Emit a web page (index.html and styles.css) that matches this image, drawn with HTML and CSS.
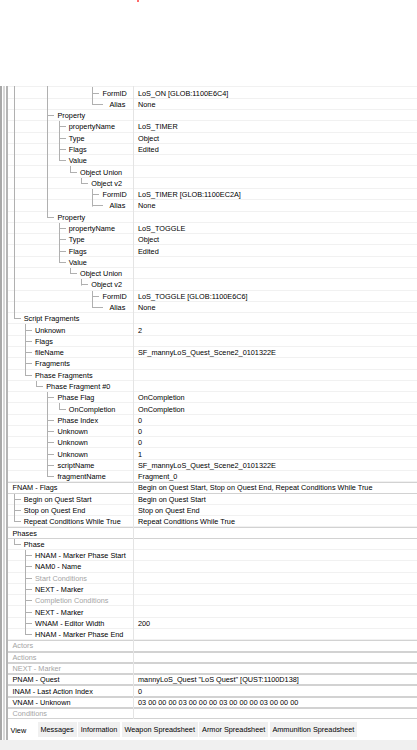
FILE: index.html
```html
<!DOCTYPE html>
<html lang="en">
<head>
<meta charset="utf-8">
<title>Record View</title>
<link rel="stylesheet" href="styles.css">
</head>
<body>
<div class="header"><div class="tick"></div></div>
<div class="work">
  <div class="bars"></div>
  <div class="main">
    <div class="grid">
      <div class="rows">
        <div class="row"><div class="name"><i class="p"></i><i></i><i></i><i class="p"></i><i></i><i></i><i class="e"></i></div><div class="val"></div></div>
        <div class="row"><div class="name"><i class="p"></i><i></i><i></i><i class="p"></i><i></i><i></i><i></i><i class="t"></i><span>FormID</span></div><div class="val">LoS_ON [GLOB:1100E6C4]</div></div>
        <div class="row"><div class="name"><i class="p"></i><i></i><i></i><i class="p"></i><i></i><i></i><i></i><i class="e w"></i><span class="al">Alias</span></div><div class="val">None</div></div>
        <div class="row"><div class="name"><i class="p"></i><i></i><i></i><i class="t"></i><span>Property</span></div><div class="val"></div></div>
        <div class="row"><div class="name"><i class="p"></i><i></i><i></i><i class="p"></i><i class="t"></i><span>propertyName</span></div><div class="val">LoS_TIMER</div></div>
        <div class="row"><div class="name"><i class="p"></i><i></i><i></i><i class="p"></i><i class="t"></i><span>Type</span></div><div class="val">Object</div></div>
        <div class="row"><div class="name"><i class="p"></i><i></i><i></i><i class="p"></i><i class="t"></i><span>Flags</span></div><div class="val">Edited</div></div>
        <div class="row"><div class="name"><i class="p"></i><i></i><i></i><i class="p"></i><i class="e"></i><span>Value</span></div><div class="val"></div></div>
        <div class="row"><div class="name"><i class="p"></i><i></i><i></i><i class="p"></i><i></i><i class="e"></i><span>Object Union</span></div><div class="val"></div></div>
        <div class="row"><div class="name"><i class="p"></i><i></i><i></i><i class="p"></i><i></i><i></i><i class="e"></i><span>Object v2</span></div><div class="val"></div></div>
        <div class="row"><div class="name"><i class="p"></i><i></i><i></i><i class="p"></i><i></i><i></i><i></i><i class="t"></i><span>FormID</span></div><div class="val">LoS_TIMER [GLOB:1100EC2A]</div></div>
        <div class="row"><div class="name"><i class="p"></i><i></i><i></i><i class="p"></i><i></i><i></i><i></i><i class="e w"></i><span class="al">Alias</span></div><div class="val">None</div></div>
        <div class="row"><div class="name"><i class="p"></i><i></i><i></i><i class="e"></i><span>Property</span></div><div class="val"></div></div>
        <div class="row"><div class="name"><i class="p"></i><i></i><i></i><i></i><i class="t"></i><span>propertyName</span></div><div class="val">LoS_TOGGLE</div></div>
        <div class="row"><div class="name"><i class="p"></i><i></i><i></i><i></i><i class="t"></i><span>Type</span></div><div class="val">Object</div></div>
        <div class="row"><div class="name"><i class="p"></i><i></i><i></i><i></i><i class="t"></i><span>Flags</span></div><div class="val">Edited</div></div>
        <div class="row"><div class="name"><i class="p"></i><i></i><i></i><i></i><i class="e"></i><span>Value</span></div><div class="val"></div></div>
        <div class="row"><div class="name"><i class="p"></i><i></i><i></i><i></i><i></i><i class="e"></i><span>Object Union</span></div><div class="val"></div></div>
        <div class="row"><div class="name"><i class="p"></i><i></i><i></i><i></i><i></i><i></i><i class="e"></i><span>Object v2</span></div><div class="val"></div></div>
        <div class="row"><div class="name"><i class="p"></i><i></i><i></i><i></i><i></i><i></i><i></i><i class="t"></i><span>FormID</span></div><div class="val">LoS_TOGGLE [GLOB:1100E6C6]</div></div>
        <div class="row"><div class="name"><i class="p"></i><i></i><i></i><i></i><i></i><i></i><i></i><i class="e w"></i><span class="al">Alias</span></div><div class="val">None</div></div>
        <div class="row"><div class="name"><i class="e"></i><span>Script Fragments</span></div><div class="val"></div></div>
        <div class="row"><div class="name"><i></i><i class="t"></i><span>Unknown</span></div><div class="val">2</div></div>
        <div class="row"><div class="name"><i></i><i class="t"></i><span>Flags</span></div><div class="val"></div></div>
        <div class="row"><div class="name"><i></i><i class="t"></i><span>fileName</span></div><div class="val">SF_mannyLoS_Quest_Scene2_0101322E</div></div>
        <div class="row"><div class="name"><i></i><i class="t"></i><span>Fragments</span></div><div class="val"></div></div>
        <div class="row"><div class="name"><i></i><i class="e"></i><span>Phase Fragments</span></div><div class="val"></div></div>
        <div class="row"><div class="name"><i></i><i></i><i class="e"></i><span>Phase Fragment #0</span></div><div class="val"></div></div>
        <div class="row"><div class="name"><i></i><i></i><i></i><i class="t"></i><span>Phase Flag</span></div><div class="val">OnCompletion</div></div>
        <div class="row"><div class="name"><i></i><i></i><i></i><i class="p"></i><i class="e"></i><span>OnCompletion</span></div><div class="val">OnCompletion</div></div>
        <div class="row"><div class="name"><i></i><i></i><i></i><i class="t"></i><span>Phase Index</span></div><div class="val">0</div></div>
        <div class="row"><div class="name"><i></i><i></i><i></i><i class="t"></i><span>Unknown</span></div><div class="val">0</div></div>
        <div class="row"><div class="name"><i></i><i></i><i></i><i class="t"></i><span>Unknown</span></div><div class="val">0</div></div>
        <div class="row"><div class="name"><i></i><i></i><i></i><i class="t"></i><span>Unknown</span></div><div class="val">1</div></div>
        <div class="row"><div class="name"><i></i><i></i><i></i><i class="t"></i><span>scriptName</span></div><div class="val">SF_mannyLoS_Quest_Scene2_0101322E</div></div>
        <div class="row"><div class="name"><i></i><i></i><i></i><i class="e"></i><span>fragmentName</span></div><div class="val">Fragment_0</div></div>
        <div class="row root"><div class="name"><span>FNAM - Flags</span></div><div class="val">Begin on Quest Start, Stop on Quest End, Repeat Conditions While True</div></div>
        <div class="row"><div class="name"><i class="t"></i><span>Begin on Quest Start</span></div><div class="val">Begin on Quest Start</div></div>
        <div class="row"><div class="name"><i class="t"></i><span>Stop on Quest End</span></div><div class="val">Stop on Quest End</div></div>
        <div class="row"><div class="name"><i class="e"></i><span>Repeat Conditions While True</span></div><div class="val">Repeat Conditions While True</div></div>
        <div class="row root"><div class="name"><span>Phases</span></div><div class="val"></div></div>
        <div class="row"><div class="name"><i class="e"></i><span>Phase</span></div><div class="val"></div></div>
        <div class="row"><div class="name"><i></i><i class="t"></i><span>HNAM - Marker Phase Start</span></div><div class="val"></div></div>
        <div class="row"><div class="name"><i></i><i class="t"></i><span>NAM0 - Name</span></div><div class="val"></div></div>
        <div class="row"><div class="name"><i></i><i class="t"></i><span class="dim">Start Conditions</span></div><div class="val"></div></div>
        <div class="row"><div class="name"><i></i><i class="t"></i><span>NEXT - Marker</span></div><div class="val"></div></div>
        <div class="row"><div class="name"><i></i><i class="t"></i><span class="dim">Completion Conditions</span></div><div class="val"></div></div>
        <div class="row"><div class="name"><i></i><i class="t"></i><span>NEXT - Marker</span></div><div class="val"></div></div>
        <div class="row"><div class="name"><i></i><i class="t"></i><span>WNAM - Editor Width</span></div><div class="val">200</div></div>
        <div class="row"><div class="name"><i></i><i class="e"></i><span>HNAM - Marker Phase End</span></div><div class="val"></div></div>
        <div class="row root"><div class="name"><span class="dim">Actors</span></div><div class="val"></div></div>
        <div class="row root"><div class="name"><span class="dim">Actions</span></div><div class="val"></div></div>
        <div class="row root"><div class="name"><span class="dim">NEXT - Marker</span></div><div class="val"></div></div>
        <div class="row root"><div class="name"><span>PNAM - Quest</span></div><div class="val">mannyLoS_Quest "LoS Quest" [QUST:1100D138]</div></div>
        <div class="row root"><div class="name"><span>INAM - Last Action Index</span></div><div class="val">0</div></div>
        <div class="row root"><div class="name"><span>VNAM - Unknown</span></div><div class="val">03 00 00 00 03 00 00 00 03 00 00 00 03 00 00 00</div></div>
        <div class="row root"><div class="name"><span class="dim">Conditions</span></div><div class="val"></div></div>
      </div>
    </div>
    <div class="tabs">
      <div class="tab on">View</div>
      <div class="tab">Messages</div>
      <div class="tab">Information</div>
      <div class="tab">Weapon Spreadsheet</div>
      <div class="tab">Armor Spreadsheet</div>
      <div class="tab">Ammunition Spreadsheet</div>
    </div>
  </div>
</div>
<div class="status"></div>
</body>
</html>
```

FILE: styles.css
```css
* { box-sizing: border-box; }

body {
  margin: 0;
  width: 417px;
  height: 750px;
  overflow: hidden;
  background: #fff;
  color: #000;
  font: 7.3px "Liberation Sans", Arial, sans-serif;
}

/* upper pane, mostly empty */
.header {
  height: 86px;
  padding-left: 137px;
}
.tick {
  width: 2px;
  height: 2px;
  background: #ff6b6b;
}

.work {
  display: flex;
  height: 654px;
}

/* splitter / frame edges on the left */
.bars {
  flex: none;
  width: 8px;
  background: linear-gradient(to right,
    #a8a8a8 0 2px, #fff 2px 3px, #d8d8d8 3px 5px, #fff 5px 6px, #b4b4b4 6px 8px);
}

.main {
  flex: 1;
  min-width: 0;
  display: flex;
  flex-direction: column;
}

.grid {
  height: 633.7px;
  overflow: hidden;
}
.rows {
  margin-top: -9.8px;
}

.row {
  display: grid;
  grid-template-columns: 125px 1fr;
  height: 11.29px;
  background: linear-gradient(#f1f1f1, #f1f1f1) 0 100% / 100% 1px no-repeat;
}
.row.root {
  background:
    linear-gradient(#d2d2d2, #d2d2d2) 0 0 / 100% 1px no-repeat,
    linear-gradient(#d2d2d2, #d2d2d2) 0 100% / 100% 1px no-repeat;
}

.name {
  display: flex;
  align-items: center;
  padding-left: 4.5px;
  white-space: nowrap;
  overflow: hidden;
}
.name span { line-height: 11px; }
.name .dim { color: #a5a5a5; }
.name .al { margin-left: 7px; }

/* tree connector cells, one per indent level */
.name i {
  flex: none;
  align-self: stretch;
  width: 11.25px;
  --ln: #b0b0b0;
}
.name i.p {
  background: linear-gradient(var(--ln), var(--ln)) 1px 0 / 1px 100% no-repeat;
}
.name i.t {
  background:
    linear-gradient(var(--ln), var(--ln)) 1px 0 / 1px 100% no-repeat,
    linear-gradient(var(--ln), var(--ln)) 1px 50% / 7px 1px no-repeat;
}
.name i.e {
  background:
    linear-gradient(var(--ln), var(--ln)) 1px 0 / 1px 55% no-repeat,
    linear-gradient(var(--ln), var(--ln)) 1px 50% / 7px 1px no-repeat;
}
.name i.e.w {
  background:
    linear-gradient(var(--ln), var(--ln)) 1px 0 / 1px 55% no-repeat,
    linear-gradient(var(--ln), var(--ln)) 1px 50% / 13px 1px no-repeat;
}

.val {
  display: flex;
  align-items: center;
  border-left: 1px solid #e4e4e4;
  padding-left: 4px;
  white-space: nowrap;
  overflow: hidden;
  line-height: 11px;
}

/* page control tabs */
.tabs {
  flex: 1;
  display: flex;
  align-items: flex-start;
  gap: 1.5px;
}
.tab {
  margin-top: 2.5px;
  height: 15px;
  line-height: 15px;
  padding: 0 2.8px;
  background: #f0f0f0;
  white-space: nowrap;
}
.tab.on {
  margin-top: 0;
  height: 20.3px;
  line-height: 22px;
  padding: 0 10px 0 2.5px;
  background: #fff;
}

.status {
  height: 10px;
  background: #f0f0f0;
}
```
